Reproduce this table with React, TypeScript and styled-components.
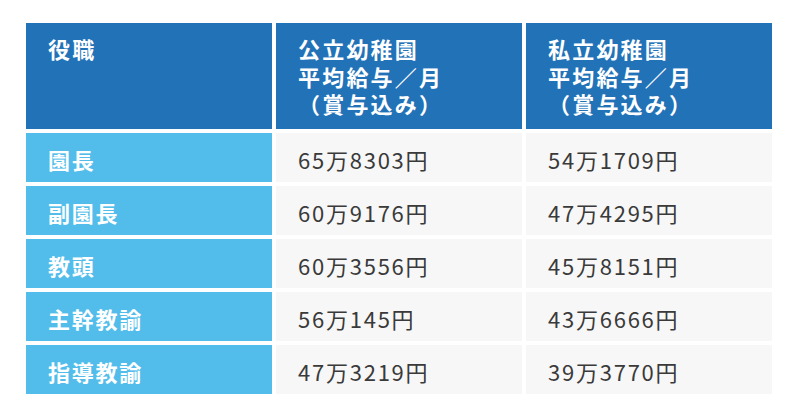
import React from "react";
import styled, { createGlobalStyle } from "styled-components";

const GlobalStyle = createGlobalStyle`
  html, body {
    margin: 0;
    padding: 0;
    background: #ffffff;
  }
  body {
    font-family: "Noto Sans CJK JP", "Noto Sans", sans-serif;
  }
`;

const Page = styled.div`
  width: 800px;
  height: 414px;
  box-sizing: border-box;
  padding: 23px 28px 0 26px;
  background: #ffffff;
`;

const Table = styled.div`
  display: grid;
  grid-template-columns: repeat(3, 246px);
  grid-template-rows: 106px repeat(5, 49px);
  gap: 4px;
`;

const HeadCell = styled.div`
  background: #2272b8;
  color: #ffffff;
  font-weight: 700;
  font-size: 22px;
  line-height: 27.5px;
  letter-spacing: 0.1em;
  padding: 12px 22px 0;
  box-sizing: border-box;
`;

const Line = styled.div`
  white-space: nowrap;
`;

const BodyCell = styled.div<{ $label?: boolean }>`
  background: ${(p) => (p.$label ? "#52bdea" : "#f7f7f7")};
  color: ${(p) => (p.$label ? "#ffffff" : "#3a3a3a")};
  font-weight: ${(p) => (p.$label ? 700 : 400)};
  font-size: 22px;
  letter-spacing: 0.08em;
  display: flex;
  align-items: center;
  padding: 2px 22px 0;
  box-sizing: border-box;
  white-space: nowrap;
`;

const rows: [string, string, string][] = [
  ["園長", "65万8303円", "54万1709円"],
  ["副園長", "60万9176円", "47万4295円"],
  ["教頭", "60万3556円", "45万8151円"],
  ["主幹教諭", "56万145円", "43万6666円"],
  ["指導教諭", "47万3219円", "39万3770円"],
];

export default function App() {
  return (
    <>
      <GlobalStyle />
      <Page>
        <Table>
          <HeadCell>
            <Line>役職</Line>
          </HeadCell>
          <HeadCell>
            <Line>公立幼稚園</Line>
            <Line>平均給与／月</Line>
            <Line>（賞与込み）</Line>
          </HeadCell>
          <HeadCell>
            <Line>私立幼稚園</Line>
            <Line>平均給与／月</Line>
            <Line>（賞与込み）</Line>
          </HeadCell>
          {rows.map(([label, pub, priv]) => (
            <React.Fragment key={label}>
              <BodyCell $label>{label}</BodyCell>
              <BodyCell>{pub}</BodyCell>
              <BodyCell>{priv}</BodyCell>
            </React.Fragment>
          ))}
        </Table>
      </Page>
    </>
  );
}
